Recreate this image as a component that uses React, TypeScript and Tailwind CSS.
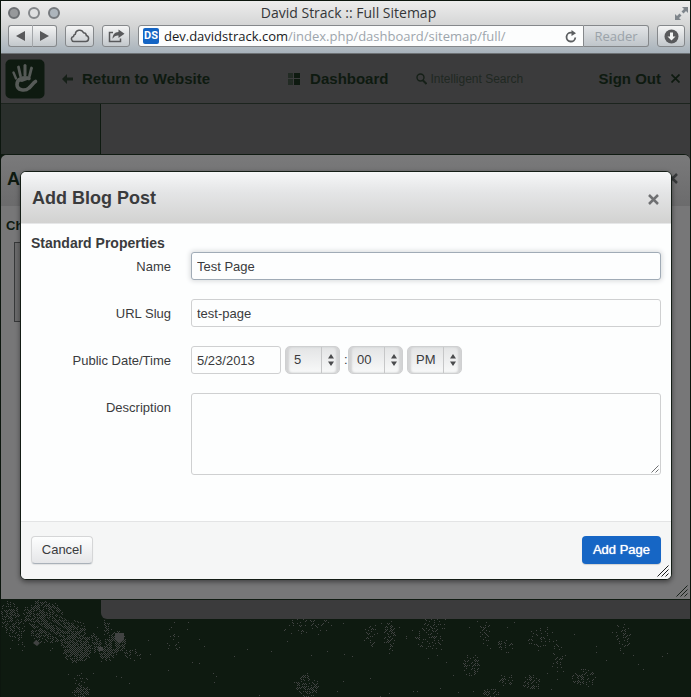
import React from 'react';

const mac = 'font-["Open_Sans","Noto_Sans",sans-serif]';
const chromeButton =
  'flex h-[22px] items-center justify-center rounded-[3px] border border-[#85888b] bg-linear-to-b from-[#f4f4f4] to-[#c3c8cc] text-[#58595b]';

/* ---------- drawings ---------- */

function HandLogo() {
  return (
    <svg width="40" height="40" viewBox="0 0 40 40" aria-hidden="true">
      <rect x="0.5" y="0.5" width="39" height="39" rx="5" fill="#0e1a10" />
      <g stroke="#565a57" strokeLinecap="round" fill="none">
        <path d="M8.500 13.500 L11 19.500" strokeWidth="2.400" />
        <path d="M13.500 8 L15.500 17" strokeWidth="2.800" />
        <path d="M20 6.500 L20 16" strokeWidth="3" />
        <path d="M26.500 9 L24.500 17" strokeWidth="2.800" />
        <path d="M24 19.500 C18 17.500 12 20 12 25.500 C12 31.500 20 32.500 24 29 C27 26.500 28 24 30.500 22.500" strokeWidth="3.600" />
      </g>
      <path d="M12 22 L17 18 L25 17.500 L25 20 L17 23 Z" fill="#565a57" />
    </svg>
  );
}

function ResizeGrip({ color }: { color: string }) {
  return (
    <svg width="12" height="12" viewBox="0 0 12 12" stroke={color} fill="none" aria-hidden="true">
      <path d="M0.500 11.500 L11.500 0.500 M4.500 11.500 L11.500 4.500 M8.500 11.500 L11.500 8.500" />
    </svg>
  );
}

const clusters = [
  { x: 8, y: 16, rx: 10, ry: 14, n: 150 },
  { x: 14, y: 28, rx: 10, ry: 12, n: 60 },
  { x: 42, y: 15, rx: 20, ry: 15, n: 420 },
  { x: 46, y: 32, rx: 18, ry: 12, n: 260 },
  { x: 66, y: 30, rx: 18, ry: 12, n: 260 },
  { x: 80, y: 44, rx: 20, ry: 12, n: 380 },
  { x: 75, y: 53, rx: 13, ry: 9, n: 240 },
  { x: 106, y: 50, rx: 10, ry: 10, n: 230 },
  { x: 116, y: 42, rx: 9, ry: 10, n: 230 },
  { x: 130, y: 54, rx: 14, ry: 6, n: 26 },
  { x: 105, y: 27, rx: 3, ry: 9, n: 26 },
  { x: 79, y: 82, rx: 7, ry: 10, n: 20 },
  { x: 80, y: 92, rx: 9, ry: 5, n: 90 },
  { x: 19, y: 44, rx: 4, ry: 9, n: 12 },
  { x: 172, y: 40, rx: 8, ry: 14, n: 18 },
  { x: 305, y: 26, rx: 26, ry: 9, n: 50 },
  { x: 306, y: 86, rx: 11, ry: 12, n: 120 },
  { x: 370, y: 34, rx: 7, ry: 12, n: 36 },
  { x: 388, y: 36, rx: 6, ry: 16, n: 70 },
  { x: 428, y: 38, rx: 14, ry: 12, n: 70 },
  { x: 434, y: 24, rx: 13, ry: 6, n: 30 },
  { x: 470, y: 66, rx: 8, ry: 12, n: 60 },
  { x: 484, y: 30, rx: 6, ry: 12, n: 30 },
  { x: 503, y: 46, rx: 9, ry: 6, n: 30 },
  { x: 540, y: 38, rx: 14, ry: 12, n: 42 },
  { x: 582, y: 78, rx: 12, ry: 9, n: 70 },
  { x: 530, y: 83, rx: 9, ry: 7, n: 50 },
  { x: 505, y: 80, rx: 8, ry: 6, n: 24 },
  { x: 622, y: 36, rx: 8, ry: 14, n: 46 },
  { x: 556, y: 60, rx: 5, ry: 20, n: 28 },
  { x: 490, y: 93, rx: 8, ry: 4, n: 30 },
  { x: 345, y: 55, rx: 340, ry: 46, n: 110 },
];

function specks() {
  let seed = 41;
  const next = () => {
    seed = (seed * 16807) % 2147483647;
    return seed / 2147483647;
  };
  let d = '';
  for (const c of clusters) {
    for (let i = 0; i < c.n; i++) {
      const a = next() * Math.PI * 2;
      const r = Math.pow(next(), 0.6);
      const x = Math.round(c.x + Math.cos(a) * r * c.rx);
      const y = Math.round((c.y + Math.sin(a) * r * c.ry) / 2) * 2 + (Math.abs(x) % 2);
      d += `M${x} ${y}h1v1h-1z`;
    }
  }
  return d;
}

function Foliage() {
  return (
    <svg className="h-[98px] w-full" viewBox="0 0 689 98" preserveAspectRatio="xMinYMax slice" aria-hidden="true">
      <path d={specks()} fill="#414342" />
      <path d="M54 13 L78 26 M44 19 L66 32 M34 24 L60 40 M6 28 L16 20" stroke="#0e1a10" strokeWidth="2" />
      <path d="M32 44l3-3 4 3-3 3z M114 34h9v7l-5 3-4-4z M97 48h5v4h-4z" fill="#414342" />
      <path d="M100 40h4v6h-3z M111 42h3v8h-3z" fill="#0e1a10" />
    </svg>
  );
}

/* ---------- browser chrome ---------- */

function BrowserChrome() {
  return (
    <header className={`${mac} border-b border-[#6d7174] bg-linear-to-b from-[#ededed] via-[#d3d4d4] to-[#a7b2bb]`}>
      <div className="grid h-6 grid-cols-[60px_1fr_60px] items-center pl-[7px] pr-px">
        <div className="flex gap-2">
          <span className="size-3 rounded-full border-2 border-[#6d7073] bg-[#97999b]" />
          <span className="size-3 rounded-full border-2 border-[#84878a] bg-[#dfe0e1]" />
          <span className="size-3 rounded-full border-2 border-[#75797d] bg-[#adb5bc]" />
        </div>
        <h1 className="text-center text-sm leading-[22px] text-[#343638]">David Strack :: Full Sitemap</h1>
        <button type="button" aria-label="Full screen" className="justify-self-end">
          <svg width="15" height="15" viewBox="0 0 15 15" fill="#7e858b" aria-hidden="true">
            <path d="M8 1h6v6l-2-2-2.500 2.500-2-2L10 3z M1 8l2 2 2.500-2.500 2 2L5 12l2 2H1z" />
          </svg>
        </button>
      </div>
      <div className="flex gap-2 pb-1.5 pl-[7px] pr-[5px]">
        <div className="flex">
          <button type="button" aria-label="Back" className={`${chromeButton} w-6 rounded-r-none border-r-0`}>
            <svg width="9" height="10" viewBox="0 0 9 10" fill="currentColor" aria-hidden="true"><path d="M9 0v10L0 5z" /></svg>
          </button>
          <button type="button" aria-label="Forward" className={`${chromeButton} w-[25px] rounded-l-none border-l-[#a3a6a9]`}>
            <svg width="9" height="10" viewBox="0 0 9 10" fill="currentColor" aria-hidden="true"><path d="M0 0v10l9-5z" /></svg>
          </button>
        </div>
        <button type="button" aria-label="iCloud tabs" className={`${chromeButton} w-[29px]`}>
          <svg width="20" height="14" viewBox="0 0 20 14" fill="none" stroke="currentColor" strokeWidth="1.500" aria-hidden="true">
            <path d="M4.500 12.500h11.200a3 3 0 0 0 .6-5.900 3 3 0 0 0-2.800-2.900A4.300 4.300 0 0 0 5.300 5.200a2.300 2.300 0 0 0-1.800 2.200 2.600 2.600 0 0 0 1 5.100z" />
          </svg>
        </button>
        <button type="button" aria-label="Share" className={`${chromeButton} w-[28px]`}>
          <svg width="17" height="14" viewBox="0 0 17 14" aria-hidden="true">
            <path d="M5 3.500H1.500v9h11V9.500" fill="none" stroke="currentColor" strokeWidth="1.500" />
            <path d="M10.500 0.500 L16.500 4.800 L10.500 9 V6.500 C8 6.300 6 7.500 4.500 9.800 C4.500 6 6.500 3.200 10.500 3 Z" fill="currentColor" />
          </svg>
        </button>
        <div className="flex h-[22px] min-w-0 flex-1">
          <div className="flex min-w-0 flex-1 items-center rounded-l-[3px] border border-[#85888b] bg-[#fcfdfd] pl-1 pr-1.5">
            <span className='mr-[5px] flex size-4 shrink-0 items-center justify-center rounded-[2px] bg-[#1565c4] font-["Roboto",sans-serif] text-[11px] font-bold leading-4 text-white'>
              DS
            </span>
            <div
              role="textbox"
              aria-label="Address"
              contentEditable
              suppressContentEditableWarning
              className="min-w-0 flex-1 overflow-hidden whitespace-nowrap text-[13px] leading-5 text-[#17191b]"
            >
              dev.davidstrack.com<span className="text-[#9da5ac]">/index.php/dashboard/sitemap/full/</span>
            </div>
            <button type="button" aria-label="Reload" className="text-[#5c5f61]">
              <svg width="12" height="13" viewBox="0 0 12 13" aria-hidden="true">
                <path d="M10.300 7.500A4.400 4.400 0 1 1 6 2.700h1" fill="none" stroke="currentColor" strokeWidth="1.800" />
                <path d="M6.500 0 L11 3.200 L6.500 6z" fill="currentColor" />
              </svg>
            </button>
          </div>
          <button type="button" className="w-[65px] rounded-r-[3px] border border-l-0 border-[#85888b] bg-linear-to-b from-[#e3e5e7] to-[#bfc5ca] text-[13px] leading-5 text-[#9ba3aa]">
            Reader
          </button>
        </div>
        <button type="button" aria-label="Downloads" className={`${chromeButton} w-[28px]`}>
          <svg width="15" height="15" viewBox="0 0 15 15" aria-hidden="true">
            <circle cx="7.500" cy="7.500" r="7" fill="currentColor" />
            <path d="M6 3.500h3v4h2.500L7.500 11.500 3.500 7.500H6z" fill="#f2f3f3" />
          </svg>
        </button>
      </div>
    </header>
  );
}

/* ---------- dimmed dashboard ---------- */

function DashboardBar() {
  return (
    <nav className="flex h-[50px] items-center justify-between border-b border-[#1c241e] bg-[#3b3b3c] pl-1 pr-2.5 text-[15px] font-bold leading-5 text-[#0e1a10]">
      <div className="flex items-center gap-4">
        <HandLogo />
        <a href="#site" className="flex items-center gap-2">
          <svg width="13" height="10" viewBox="0 0 13 10" aria-hidden="true">
            <path d="M6 0 L1 5 L6 10 V6.500 H12 V3.500 H6z" fill="#162018" />
          </svg>
          Return to Website
        </a>
      </div>
      <div className="flex items-center pl-1.5">
        <a href="#dashboard" className="mr-7 flex items-center gap-2.5">
          <svg width="12" height="12" viewBox="0 0 12 12" aria-hidden="true">
            <path d="M6 0h6v5H6z M6 6h6v6H6z" fill="#0e1a10" />
            <path d="M0 0h5v5H0z M0 6h5v6H0z" fill="#222b24" />
          </svg>
          Dashboard
        </a>
        <label htmlFor="search" className="mr-[3px]" aria-label="Search">
          <svg width="11" height="12" viewBox="0 0 11 12" fill="none" stroke="#162018" aria-hidden="true">
            <circle cx="4.500" cy="4.500" r="3.500" strokeWidth="1.400" />
            <path d="M7 7.500 L10.500 11" strokeWidth="2" />
          </svg>
        </label>
        <input
          id="search"
          type="text"
          placeholder="Intelligent Search"
          className="w-24 bg-transparent text-xs font-normal outline-none placeholder:text-[#202822]"
        />
      </div>
      <a href="#signout" className="flex items-center gap-2.5">
        Sign Out
        <svg width="9" height="9" viewBox="0 0 9 9" stroke="#0e1a10" strokeWidth="1.700" aria-hidden="true">
          <path d="M0.500 0.500 L8.500 8.500 M8.500 0.500 L0.500 8.500" />
        </svg>
      </a>
    </nav>
  );
}

/* ---------- modal ---------- */

const fieldBox = 'rounded-[3px] border border-[#cfd0d1] bg-[#fdfefe] px-[5px] text-[13px] leading-[18px] text-[#3a3b3d] outline-none';
const labelText = 'pt-1.5 text-right leading-[18px]';

function Picker({ label, options }: { label: string; options: string[] }) {
  return (
    <span className="relative inline-block h-7 w-[55px]">
      <select
        aria-label={label}
        className="size-full appearance-none rounded-[5px] border border-[#cfd0d1] bg-linear-to-b from-[#e3e4e5] to-[#f8f9f9] pl-2 text-[13px] text-[#3a3b3d] shadow-[inset_3px_0_2px_#d2d3d4,inset_-3px_0_2px_#d2d3d4] outline-none"
      >
        {options.map((o) => (
          <option key={o}>{o}</option>
        ))}
      </select>
      <span className="pointer-events-none absolute inset-y-px right-0 flex w-[19px] items-center justify-center border-l border-[#c6c7c8]">
        <svg width="6" height="12" viewBox="0 0 6 12" fill="#4a4b4d" aria-hidden="true">
          <path d="M3 0 L6 4.500 H0z M3 12 L6 7.500 H0z" />
        </svg>
      </span>
    </span>
  );
}

function AddBlogPost() {
  return (
    <form
      role="dialog"
      aria-label="Add Blog Post"
      className="relative z-10 col-start-1 row-start-1 mb-[19px] ml-[19px] mr-[18px] mt-4 overflow-hidden rounded-md border border-[#141d16] bg-[#fdfefe] text-[13px] text-[#3a3b3d] shadow-[0_2px_5px_rgba(0,0,0,0.45)]"
    >
      <div className="flex h-[52px] items-center justify-between border-b border-[#e6e7e8] bg-linear-to-b from-[#f6f7f8] via-[#e4e5e6] via-40% to-[#d2d2d1] pl-[11px] pr-3">
        <h2 className="text-lg font-bold leading-6">Add Blog Post</h2>
        <button type="button" aria-label="Close" className="mt-1">
          <svg width="11" height="11" viewBox="0 0 11 11" stroke="#6f7072" strokeWidth="2.500" aria-hidden="true">
            <path d="M1 1 L10 10 M10 1 L1 10" />
          </svg>
        </button>
      </div>

      <div className="px-[10px] pb-[46px] pt-2.5">
        <h3 className="text-sm font-bold leading-[18px]">Standard Properties</h3>
        <div className="grid grid-cols-[140px_1fr] gap-x-5 gap-y-[19px]">
          <label htmlFor="name" className={labelText}>Name</label>
          <input
            id="name"
            type="text"
            defaultValue="Test Page"
            className="h-7 rounded-[3px] border border-[#a0abb6] bg-[#fdfefe] px-[5px] outline-none shadow-[0_0_5px_1px_#d8dadc]"
          />

          <label htmlFor="slug" className={labelText}>URL Slug</label>
          <input id="slug" type="text" defaultValue="test-page" className={`${fieldBox} h-7`} />

          <label htmlFor="date" className={labelText}>Public Date/Time</label>
          <div className="flex items-center">
            <input id="date" type="text" defaultValue="5/23/2013" className={`${fieldBox} mr-1 h-7 w-[90px]`} />
            <Picker label="Hour" options={['5', '6', '7']} />
            <span className="w-2 pl-1 leading-[18px]">:</span>
            <Picker label="Minute" options={['00', '15', '30']} />
            <span className="w-1" />
            <Picker label="AM or PM" options={['PM', 'AM']} />
          </div>

          <label htmlFor="description" className={labelText}>Description</label>
          <div className="relative flex">
            <textarea id="description" className={`${fieldBox} h-[82px] w-full resize-none`} />
            <svg className="pointer-events-none absolute bottom-0.5 right-0.5" width="8" height="8" viewBox="0 0 8 8" stroke="#6f7072" aria-hidden="true">
              <path d="M0.500 7.500 L7.500 0.500 M4.500 7.500 L7.500 4.500" />
            </svg>
          </div>
        </div>
      </div>

      <div className="relative flex h-[58px] items-start justify-between border-t border-[#e3e4e5] bg-[#f5f6f6] px-[10px] pt-3.5">
        <button
          type="button"
          className="h-7 w-[62px] rounded-[4px] border border-[#d5d6d7] border-b-[#a9b1b9] bg-linear-to-b from-[#fdfefe] to-[#e5e6e8] shadow-[0_1px_1px_rgba(0,0,0,0.08)]"
        >
          Cancel
        </button>
        <button type="submit" className="h-7 w-[79px] rounded-[4px] bg-[#1666c5] text-white shadow-[0_1px_1px_rgba(0,0,0,0.15)] [text-shadow:0_0_1px_#fff]">
          Add Page
        </button>
        <span className="absolute bottom-0.5 right-0.5">
          <ResizeGrip color="#1a1c1d" />
        </span>
      </div>
    </form>
  );
}

function BackDialog() {
  return (
    <section className="relative col-start-1 row-start-1 mb-[19px] mt-[50px] grid rounded-t-md border-y border-[#101b12] bg-[#777778]">
      <div className="col-start-1 row-start-1 text-[#0e1a10]">
        <div className="flex h-[51px] items-center justify-between rounded-t-md bg-linear-to-b from-[#7a7a7b] to-[#6b6b6c] pb-1 pl-1.5 pr-3">
          <h2 className="text-lg font-bold leading-6">A</h2>
          <svg width="11" height="11" viewBox="0 0 11 11" stroke="#37393a" strokeWidth="2.500" aria-hidden="true">
            <path d="M1 1 L10 10 M10 1 L1 10" />
          </svg>
        </div>
        <p className="pl-[5px] pt-2.5 text-[13px] font-bold leading-5">Ch</p>
        <div className="ml-[13px] mt-1.5 h-20 w-10 border border-[#37393a] bg-[#6a6a6b]" />
      </div>
      <AddBlogPost />
      <span className="absolute bottom-0.5 right-0.5">
        <ResizeGrip color="#17201a" />
      </span>
    </section>
  );
}

export default function App() {
  return (
    <div className='relative isolate flex min-h-screen flex-col border-x border-t border-[#0c160e] bg-[#0e1a10] font-["Liberation_Sans",Arial,sans-serif]'>
      <div className="absolute inset-x-0 bottom-0 -z-10">
        <Foliage />
      </div>
      <BrowserChrome />
      <DashboardBar />
      <main className="grid">
        <div className="col-start-1 row-start-1 flex">
          <div className="h-[50px] w-[100px] border-r border-[#0e1a10] bg-[#2a2f2c]" />
          <div className="flex-1 rounded-bl-md bg-[#3b3b3c]" />
        </div>
        <BackDialog />
      </main>
    </div>
  );
}
